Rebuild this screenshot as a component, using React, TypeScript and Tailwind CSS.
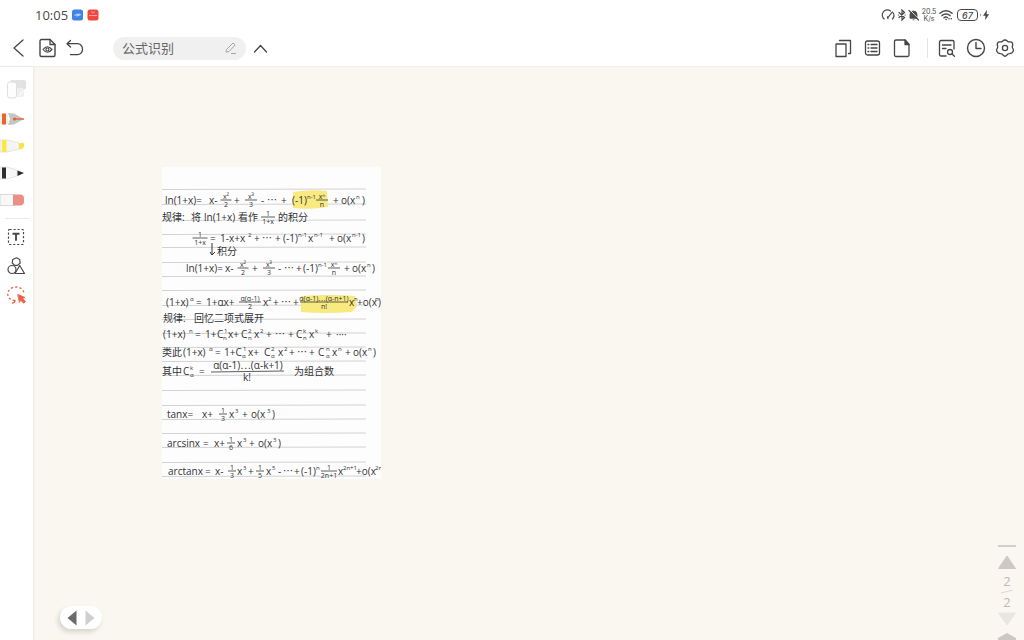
import { ReactNode, useState } from "react";

interface IGlyph {
  x: number;
  y: number;
  text: string;
}

interface IFraction {
  x: number;
  y: number;
  width: number;
  top: string;
  bottom: string;
}

interface INoteLine {
  y: number;
  // [x, text]
  main: [number, string][];
  // [x, text], raised above the baseline
  sup?: [number, string][];
  // [x, text], lowered below the baseline
  sub?: [number, string][];
  // [centre, width, top, bottom]
  frac?: [number, number, string, string][];
}

const noteLines: INoteLine[] = [
  {
    y: 37,
    main: [[3, "ln(1+x)="], [47, "x-"], [72, "+"], [99, "-"], [105, "⋯"], [119, "+"], [130, "(-1)"], [171, "+"], [179, "o(x"], [200, ")"]],
    sup: [[145, "n-1"], [194, "n"]],
    frac: [[64, 11, "x²", "2"], [89, 12, "x³", "3"], [160, 12, "xⁿ", "n"]],
  },
  {
    y: 54,
    main: [[0, "规律:"], [29, "将"], [42, "ln(1+x)"], [76, "看作"], [116, "的积分"]],
    frac: [[106, 14, "1", "1+x"]],
  },
  {
    y: 75,
    main: [[48, "="], [58, "1-x+x"], [92, "+"], [100, "⋯"], [113, "+"], [121, "(-1)"], [146, "x"], [167, "+"], [175, "o(x"], [200, ")"]],
    sup: [[86, "2"], [136, "n-1"], [152, "n-1"], [190, "n-1"]],
    frac: [[38, 15, "1", "1+x"]],
  },
  { y: 88, main: [[55, "积分"]] },
  {
    y: 105,
    main: [[24, "ln(1+x)="], [63, "x-"], [90, "+"], [116, "-"], [122, "⋯"], [134, "+"], [141, "(-1)"], [182, "+"], [190, "o(x"], [210, ")"]],
    sup: [[156, "n-1"], [205, "n"]],
    frac: [[81, 11, "x²", "2"], [107, 12, "x³", "3"], [172, 12, "xⁿ", "n"]],
  },
  {
    y: 139,
    main: [[4, "(1+x)"], [34, "="], [44, "1+αx+"], [101, "x"], [111, "+"], [119, "⋯"], [131, "+"], [187, "x"], [195, "+o(x"], [216, ")"]],
    sup: [[28, "α"], [106, "2"], [192, "n"], [213, "n"]],
    frac: [[88, 22, "α(α-1)", "2"], [162, 48, "α(α-1)⋯(α-n+1)", "n!"]],
  },
  { y: 155, main: [[1, "规律:"], [32, "回忆二项式展开"]] },
  {
    y: 171,
    main: [[1, "(1+x)"], [33, "="], [43, "1+"], [55, "C"], [66, "x+"], [79, "C"], [92, "x"], [104, "+"], [113, "⋯"], [126, "+"], [134, "C"], [147, "x"], [164, "+"], [174, "····"]],
    sup: [[27, "n"], [62, "1"], [86, "2"], [98, "2"], [141, "k"], [153, "k"]],
    sub: [[61, "n"], [86, "n"], [141, "n"]],
  },
  {
    y: 189,
    main: [[0, "类此"], [21, "(1+x)"], [53, "="], [62, "1+C"], [86, "x+"], [102, "C"], [116, "x"], [127, "+"], [135, "⋯"], [147, "+"], [156, "C"], [170, "x"], [183, "+"], [191, "o(x"], [211, ")"]],
    sup: [[47, "α"], [81, "1"], [109, "2"], [122, "2"], [164, "n"], [176, "n"], [206, "n"]],
    sub: [[80, "α"], [109, "α"], [164, "α"]],
  },
  {
    y: 208,
    main: [[0, "其中"], [21, "C"], [37, "="], [132, "为组合数"]],
    sup: [[28, "k"]],
    sub: [[28, "α"]],
  },
  {
    y: 251,
    main: [[5, "tanx="], [40, "x+"], [67, "x"], [80, "+"], [89, "o(x"], [110, ")"]],
    sup: [[73, "3"], [105, "3"]],
    frac: [[61, 8, "1", "3"]],
  },
  {
    y: 280,
    main: [[5, "arcsinx"], [41, "="], [52, "x+"], [75, "x"], [87, "+"], [96, "o(x"], [116, ")"]],
    sup: [[81, "3"], [111, "3"]],
    frac: [[69, 8, "1", "6"]],
  },
  {
    y: 308,
    main: [[6, "arctanx"], [43, "="], [53, "x-"], [75, "x"], [86, "+"], [104, "x"], [116, "-"], [121, "⋯"], [132, "+"], [139, "(-1)"], [176, "x"], [194, "+o(x"]],
    sup: [[81, "3"], [110, "5"], [154, "n"], [181, "2n+1"], [213, "2n"]],
    frac: [[70, 8, "1", "3"], [98, 8, "1", "5"], [167, 16, "1", "2n+1"]],
  },
];

const rules = [22, 37, 53, 67, 80, 95, 109, 123, 138, 152, 166, 180, 194, 208, 223, 238, 252, 266, 280, 295, 309];

const Glyph = ({ x, y, text }: IGlyph) => (
  <text x={x} y={y}>{text}</text>
);

const Fraction = ({ x, y, width, top, bottom }: IFraction) => (
  <g textAnchor="middle" className="text-[7px]">
    <text x={x} y={y - 5}>{top}</text>
    <path d={`M${x - width / 2} ${y - 4}h${width}`} stroke="currentColor" strokeWidth="0.8" />
    <text x={x} y={y + 3}>{bottom}</text>
  </g>
);

const HandwrittenNote = () => (
  <svg
    width="219"
    height="312"
    viewBox="0 0 219 312"
    fill="currentColor"
    className="mt-[100px] ml-[129px] shrink-0 bg-[#fdfdfd] text-[#333336] font-['Open_Sans','Noto_Sans_CJK_SC',sans-serif]"
  >
    <g stroke="#d2d2d4" strokeWidth="1">
      {rules.map((y) => (
        <path key={y} d={`M0 ${y}.5L204 ${y}`} />
      ))}
    </g>
    <g fill="#f8ea80">
      <path d="M131 25q17-3 34-1l1 16q-17 3-35 1z" />
      <path d="M139 129q28-2 54 0l2 10-5 6q-28 2-51 0z" />
    </g>
    {noteLines.map((line) => (
      <g key={line.y} className="text-[10px]">
        {line.main.map(([x, text]) => (
          <Glyph key={x} x={x} y={line.y} text={text} />
        ))}
        <g className="text-[6px]">
          {line.sup?.map(([x, text]) => <Glyph key={x} x={x} y={line.y - 5} text={text} />)}
          {line.sub?.map(([x, text]) => <Glyph key={x} x={x} y={line.y + 2} text={text} />)}
        </g>
        {line.frac?.map(([x, width, top, bottom]) => (
          <Fraction key={x} x={x} y={line.y} width={width} top={top} bottom={bottom} />
        ))}
      </g>
    ))}
    {/* The wide fraction is written as large as the text beside it */}
    <g textAnchor="middle" className="text-[10px]">
      <text x="86" y="202">α(α-1)⋯(α-k+1)</text>
      <path d="M49 205l73-1" stroke="currentColor" strokeWidth="0.8" />
      <text x="85" y="214">k!</text>
    </g>
    <path d="M50 76v12m-2-3l2 3 3-3" fill="none" stroke="currentColor" />
  </svg>
);

interface IconButtonProps {
  label: string;
  children: ReactNode;
  className?: string;
}

const IconButton = ({ label, children, className = "" }: IconButtonProps) => (
  <button type="button" aria-label={label} className={`flex items-center justify-center ${className}`}>
    <svg width="20" height="20" viewBox="0 0 20 20" fill="none" stroke="currentColor" strokeWidth="1.3" strokeLinecap="round" strokeLinejoin="round">
      {children}
    </svg>
  </button>
);

const StatusBar = () => (
  <div className="flex h-[30px] items-center justify-between pr-[34px] pl-[35px] text-[#4a4a4a]">
    <div className="flex items-center gap-1">
      <span className="text-[13px] leading-4">10:05</span>
      <svg width="27" height="12" viewBox="0 0 27 12">
        <rect x="0" y="0.5" width="11" height="11" rx="2.5" fill="#3f83e4" />
        <path d="M2.5 6h6M5 4.5L6.5 6 5 7.5M7 4.5L8.5 6" stroke="#e8f1ff" strokeWidth="0.9" fill="none" />
        <rect x="15.5" y="0.5" width="11" height="11" rx="2.5" fill="#f0483f" />
        <path d="M19 2.5l2 1.5 2-1.5M17 6.5h8" stroke="#ffb9b2" strokeWidth="0.8" fill="none" />
      </svg>
    </div>
    <div className="flex items-center gap-0.5">
      <svg width="38" height="12" viewBox="0 0 38 12" fill="none" stroke="currentColor" strokeWidth="1.2" strokeLinecap="round">
        <path d="M3.2 10A5 5 0 0 1 9.5 2M11.8 3.5A5 5 0 0 1 11.5 10M7 8.5L11.200 3" />
        <path d="M7 9.500a1.200 1.200 0 0 1 0-2" />
        <path d="M18 3.500l5.500 5-2.500 2.500v-10l2.500 2.500-5.500 5" />
        <path d="M17.400 6h.2M24 6h.2" />
        <path d="M29 9V5.500a3.500 3.500 0 0 1 7 0V9zM32 10.800h1" fill="currentColor" strokeWidth="0.8" />
        <path d="M29 1l8.500 9" stroke="#fff" strokeWidth="1" />
        <path d="M28 1.500l9.500 9.500" />
      </svg>
      <span className="w-4 text-center font-['Inter',sans-serif] text-[7px] leading-[7px]">20.5 K/s</span>
      <svg width="14" height="12" viewBox="0 0 14 12" fill="none" stroke="currentColor" strokeWidth="1.5" strokeLinecap="round">
        <path d="M1 4.200a8.500 8.500 0 0 1 12 0M3 6.600a5.600 5.600 0 0 1 8 0M5 8.800a2.800 2.800 0 0 1 3.500-.3" />
        <path d="M7 10.500h.1M10 9.800h.1M12.300 9.800h.1" />
      </svg>
      <div className="ml-0.5 flex items-center gap-0.5">
        <span className="flex h-3 w-[21px] items-center justify-center rounded border border-[#4a4a4a] font-['Inter',sans-serif] text-[9px] leading-none font-medium italic">67</span>
        <svg width="10" height="12" viewBox="0 0 10 12" fill="currentColor">
          <path d="M0 4.500q1.500 1.500 0 3zM7 0.800L3 6.700h2.500L5 11.200l4.200-6H6.600z" />
        </svg>
      </div>
    </div>
  </div>
);

const Toolbar = () => {
  const [title, setTitle] = useState<string>("公式识别");

  return (
    <header className="flex h-9 items-center justify-between pr-[9px] pl-[9px] text-[#454545]">
      <div className="flex items-center gap-2">
        <IconButton label="Back">
          <path d="M14 2L5 10l9 8" />
        </IconButton>
        <IconButton label="Preview">
          <path d="M4.500 1.500H13l5 5v10.500a1.500 1.500 0 0 1-1.500 1.500H4.500A1.500 1.500 0 0 1 3 17V3a1.500 1.500 0 0 1 1.500-1.500z" strokeWidth="1.400" />
          <path d="M13 1.500v5h5" />
          <path d="M6 11.500q4.400-5.500 8.900 0-4.500 5.500-8.900 0z" strokeWidth="1.200" />
          <circle cx="10.400" cy="11.500" r="1.500" strokeWidth="1.200" />
        </IconButton>
        <IconButton label="Undo">
          <path d="M5.500 2.500L2 5.700l3.500 3.300M2.500 5.700h10a5 5.500 0 0 1 0 11H5.500" />
        </IconButton>
        <div className="ml-5 flex h-[23px] w-[133px] items-center rounded-full bg-[#f0f0f0] pr-2 pl-[9px]">
          <input
            type="text"
            aria-label="Note title"
            value={title}
            onChange={(e) => setTitle(e.target.value)}
            className="min-w-0 flex-1 bg-transparent text-[13px] leading-5 text-[#666] outline-none"
          />
          <svg width="14" height="14" viewBox="0 0 14 14" fill="none" stroke="#a5a5a5" strokeLinejoin="round">
            <path d="M2.500 8.500L9 2l2.200 2L5 10.500l-3 .7zM7 12.500h5" />
          </svg>
        </div>
        <IconButton label="Collapse" className="-ml-1">
          <path d="M4.500 14L10.500 7.500l6 6.500" />
        </IconButton>
      </div>
      <div className="flex items-center gap-[9px]">
        <IconButton label="Pages">
          <path d="M2 6h10v12.500H2zM5.500 2.500h11v13h-2" />
        </IconButton>
        <IconButton label="Outline">
          <rect x="2.500" y="3" width="14" height="14" rx="2" />
          <path d="M5 6.500h.8M8 6.500h6M5 10h.8M8 10h6M5 13.500h.8M8 13.500h6" />
        </IconButton>
        <IconButton label="New page">
          <path d="M4 2h9L17 6.500v10.500a1.500 1.500 0 0 1-1.500 1.500H4a1.500 1.500 0 0 1-1.500-1.500V3.500A1.500 1.500 0 0 1 4 2z" />
          <path d="M13 2v4.500h4z" fill="currentColor" />
        </IconButton>
        <div className="mx-1.5 h-5 w-px bg-[#e4e4e4]" />
        <IconButton label="Search note" className="-ml-1.5">
          <path d="M9 18H4a1.500 1.500 0 0 1-1.500-1.500V4A1.500 1.500 0 0 1 4 2.500h11.500A1.500 1.500 0 0 1 17 4v7M5.500 7h8.500M5.500 10.500H9" />
          <circle cx="13" cy="14" r="2.500" />
          <path d="M15 16l2.500 2.300" />
        </IconButton>
        <IconButton label="History">
          <circle cx="10" cy="10" r="8.500" strokeWidth="1.400" />
          <path d="M10 4.500V10.500h5" strokeWidth="1.400" />
        </IconButton>
        <IconButton label="Settings">
          <path d="M7.500 3.200Q10 0.800 12.500 3.200 13.500 4.200 15.200 3.900 18.200 4 17.600 7.300 17 9 17.600 10 19.500 12.800 17 14.800 15.500 15.300 14.500 15.600 12.500 15.800 12 17 10 19.500 8 17 7.500 15.800 5.500 15.600 4.500 15.300 3 14.800.5 12.800 2.400 10 3 9 2.400 7.300 1.800 4 4.800 3.900 6.500 4.200 7.500 3.200z" />
          <circle cx="10" cy="10" r="2.600" />
        </IconButton>
      </div>
    </header>
  );
};

interface PenButtonProps {
  label: string;
  children: ReactNode;
}

const PenButton = ({ label, children }: PenButtonProps) => (
  <button type="button" aria-label={label} className="block">
    <svg width="27" height="18" viewBox="0 0 27 18">{children}</svg>
  </button>
);

const Sidebar = () => (
  <nav className="z-10 flex w-[33px] shrink-0 flex-col items-start bg-white pt-[13px] text-[#4a4a4a] shadow-[1px_0_2px_rgba(0,0,0,0.06)]">
    <button type="button" aria-label="Color palette" className="mb-2.5 ml-[7px]">
      <svg width="20" height="20" viewBox="0 0 20 20">
        <rect x="3" y="0" width="16" height="9.500" rx="2" fill="#e2e2e2" />
        <rect x="9" y="8" width="8" height="9" rx="2" fill="#efefef" />
        <rect x="0.500" y="2" width="9" height="16" rx="2.500" fill="#fdfdfd" stroke="#dedede" />
        <path d="M12 16l4-5" stroke="#fff" />
      </svg>
    </button>
    <div className="flex flex-col gap-[9px]">
      <PenButton label="Fountain pen">
        <path d="M0 3.500h8v11H0z" fill="#f0f0f0" />
        <path d="M2 3.500h4v11H2z" fill="#e8652c" />
        <path d="M8 3l6 .5 10 5.500-10 5.500-6 .5 2-6z" fill="#c6c6c6" />
        <path d="M13 9h11" stroke="#e0642e" strokeWidth="1.300" />
        <circle cx="14.500" cy="9" r="1.600" fill="#e0642e" />
      </PenButton>
      <PenButton label="Highlighter">
        <path d="M0 3h7l10 2.500 2 .5v6l-2 .5L7 15H0z" fill="#f5f5f5" stroke="#dedede" strokeWidth="0.8" />
        <path d="M2 3h4.500v12H2z" fill="#fbe93e" />
        <path d="M19 6.500l4-1 1 1.500v3l-2 2-3 .5z" fill="#f5e44a" />
      </PenButton>
      <PenButton label="Pencil">
        <path d="M0 3h7l10 3v6L7 15H0z" fill="#f7f7f7" stroke="#dedede" strokeWidth="0.8" />
        <path d="M2 3.500h4v11H2z" fill="#2b2b2b" />
        <path d="M17.500 6.500L24 9l-6.500 3z" fill="#2b2b2b" />
      </PenButton>
      <PenButton label="Eraser">
        <path d="M0 3.500h14v11H0z" fill="#f8f8f8" stroke="#cfcfcf" strokeWidth="0.8" />
        <path d="M13 3.500h7a4 4 0 0 1 4 4v3a4 4 0 0 1-4 4h-7z" fill="#ea8f86" />
      </PenButton>
    </div>
    <div className="mt-[9px] ml-[5px] h-px w-6 bg-[#e8e8e8]" />
    <div className="mt-2 ml-[6px] flex flex-col gap-[9px]">
      <IconButton label="Text box">
        <rect x="2.500" y="2.500" width="15" height="15" rx="1" strokeWidth="1.200" strokeDasharray="2.200 1.800" strokeLinecap="butt" />
        <path d="M6.500 6.800h7M10 6.800v7" strokeWidth="1.900" strokeLinecap="butt" />
      </IconButton>
      <IconButton label="Shapes">
        <path d="M10.500 1.800l3.200 1.700.5 3.500-2.700 2.400H8.700L6.200 7l.5-3.500z" strokeWidth="1.200" />
        <circle cx="6" cy="13.500" r="4" strokeWidth="1.200" />
        <path d="M13.700 9.500L18.500 17.500H9z" strokeWidth="1.200" />
      </IconButton>
      <IconButton label="Lasso" className="text-[#ee6044]">
        <path d="M9 15.500C4.500 15.500 1.700 12.500 1.700 8.800S5.500 2 10 2s8 3 8 7" strokeWidth="1.300" strokeDasharray="2.200 2.200" strokeLinecap="butt" />
        <path d="M9 15.500q0 2-2.500 2.700" strokeWidth="1.300" />
        <path d="M12 9.500l7 3-2.500 1 3 3-1.800 1.800-3-3-1.200 2z" fill="currentColor" strokeWidth="0.8" />
      </IconButton>
    </div>
  </nav>
);

const PageScroller = () => (
  <aside className="absolute right-2 bottom-0 flex w-[18px] flex-col items-center text-[13px] leading-4 text-[#bdbab6]">
    <div className="mb-2 h-0.5 w-full bg-[#d2ceca]" />
    <button type="button" aria-label="Previous page">
      <svg width="18" height="14" viewBox="0 0 18 14">
        <path d="M9 1l8.500 12.500H.5z" fill="#cdc8c4" stroke="#cdc8c4" strokeLinejoin="round" />
      </svg>
    </button>
    <span className="mt-1">2</span>
    <svg width="14" height="5" viewBox="0 0 14 5">
      <path d="M1 4l12-3" stroke="#dcd8d3" />
    </svg>
    <span>2</span>
    <button type="button" aria-label="Next page" className="mt-0.5">
      <svg width="18" height="14" viewBox="0 0 18 14">
        <path d="M9 13L.5 1h17z" fill="#e9e6e1" stroke="#e9e6e1" strokeLinejoin="round" />
      </svg>
    </button>
    <button type="button" aria-label="Last page" className="mt-1.5">
      <svg width="18" height="8" viewBox="0 0 18 8">
        <path d="M0 6l9-5 9 5v2H0z" fill="#cdc8c4" />
      </svg>
    </button>
  </aside>
);

const App = () => {
  return (
    <div className="flex h-screen flex-col overflow-hidden bg-white font-['Open_Sans','Noto_Sans_CJK_SC',sans-serif]">
      <StatusBar />
      <Toolbar />
      <div className="flex min-h-0 flex-1 border-t border-[#f1efea]">
        <Sidebar />
        <main className="relative min-w-0 flex-1 overflow-hidden bg-[#faf7f0]">
          <HandwrittenNote />
          {/* Canvas paging */}
          <div className="absolute bottom-[11px] left-[27px] flex h-[23px] w-[42px] items-center justify-center gap-2 rounded-full bg-white shadow-[-2px_3px_5px_rgba(0,0,0,0.14)]">
            <button type="button" aria-label="Previous">
              <svg width="10" height="16" viewBox="0 0 10 16">
                <path d="M9.500 .5v15L.5 8z" fill="#6b6b6b" />
              </svg>
            </button>
            <button type="button" aria-label="Next">
              <svg width="10" height="16" viewBox="0 0 10 16">
                <path d="M.5 .5v15l9-7.500z" fill="#cfcfcf" />
              </svg>
            </button>
          </div>
          <PageScroller />
        </main>
      </div>
    </div>
  );
};

export default App;
